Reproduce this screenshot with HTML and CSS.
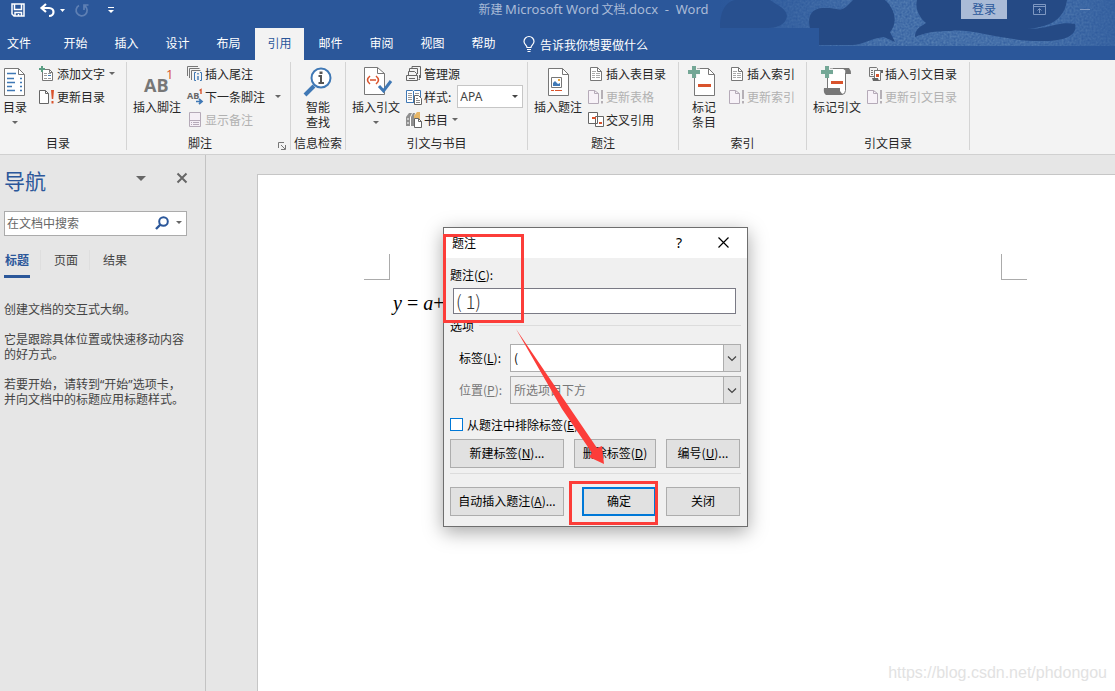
FILE: index.html
```html
<!DOCTYPE html>
<html lang="zh-CN">
<head>
<meta charset="utf-8">
<title>新建 Microsoft Word 文档.docx - Word</title>
<link rel="stylesheet" href="styles.css">
</head>
<body>
<svg class="defs" width="0" height="0" aria-hidden="true">
  <symbol id="caret" viewBox="0 0 6 3"><path d="M0 0h6L3 3z" fill="currentColor"/></symbol>
  <symbol id="refresh" viewBox="0 0 18 16"><path d="M.5 1.500h6l3 3v10h-9z" fill="#fff" stroke="#666"/><path d="M6.500 1.500v3h3" fill="none" stroke="#666"/><path d="M12 1h3l-.8 9h-1.400zM12.500 12h2v2.500h-2z" fill="#d9532c"/></symbol>
  <symbol id="refresh-off" viewBox="0 0 18 16"><path d="M.5 1.500h6l4 3v10h-10z" fill="#f7f2f8" stroke="#b5aab8"/><path d="M6.500 1.500v3h4" fill="none" stroke="#b5aab8"/><path d="M13 1h2v9h-2zM13 12h2v2.500h-2z" fill="#b5b0b6"/></symbol>
  <symbol id="list" viewBox="0 0 18 16"><path d="M2.500 1.500h7l4 4v9h-11z" fill="#fff" stroke="#777"/><path d="M9.500 1.500v4h4" fill="none" stroke="#777"/><path d="M4 5.500h4M4 7.500h3m1 0h4M4 9.500h3m1 0h4M4 11.500h3m1 0h4" stroke="#aaa"/></symbol>
</svg>
<header class="header">
  <svg class="pattern" width="395" height="46" viewBox="0 0 395 46" aria-hidden="true">
    <defs><filter id="grain"><feTurbulence type="fractalNoise" baseFrequency=".5" numOctaves="2"/><feColorMatrix values="0 0 0 0 .145 0 0 0 0 .29 0 0 0 0 .52 .9 0 0 0 0"/></filter>
    <linearGradient id="fade"><stop offset="0" stop-color="#2b579a"/><stop offset=".4" stop-color="#2b579a" stop-opacity=".1"/><stop offset=".8" stop-color="#2b579a" stop-opacity=".1"/><stop offset="1" stop-color="#2b579a" stop-opacity=".6"/></linearGradient></defs>
    <rect width="395" height="46" fill="#2b579a"/>
    <rect width="395" height="46" filter="url(#grain)"/>
    <rect width="395" height="46" fill="url(#fade)"/>
    <path d="M0 28C0 10 6 2 15 0H50C58 6 66 8 67 16C66 25 56 28 48 28z" fill="#28508f"/>
    <g fill="#254a85"><path d="M90 28C87 15 92 7 107 8C119 8 120 13 128 5L133 0H165C178 12 176 26 170 32L175 42L164 37C148 39 143 45 132 45H99V28z"/><path d="M197 0H347C345 14 337 27 306 29C332 29 337 21 355 24C358 35 345 41 325 41C285 42 252 28 231 31C214 31 204 33 195 37C195 29 200 27 206 23C198 16 195 7 197 0z"/></g>
  </svg>
  <div class="titlebar">
    <div class="quick">
      <button aria-label="保存" class="save"><svg width="15" height="15" viewBox="0 0 15 15"><path d="M1 1h12v12H3l-2-2zM3.500 1v5.500h7V1M4 13.500V9.500h6.500v4M7.500 11v2" fill="none" stroke="#fff" stroke-width="1.500"/></svg></button>
      <button aria-label="撤消"><svg width="25" height="15" viewBox="0 0 25 15"><path d="M6 1L1.500 5L6 9M2 5h7c6 0 6 8 0 8" fill="none" stroke="#fff" stroke-width="2.200"/><path d="M20 6h5l-2.500 3z" fill="#fff"/></svg></button>
      <button aria-label="重复" class="redo"><svg width="14" height="15" viewBox="0 0 14 15"><path d="M4 2.500A5.500 5.500 0 1 0 10 3M9 7V2h4.500" fill="none" stroke="#5f80b4" stroke-width="1.700"/></svg></button>
      <button aria-label="自定义快速访问工具栏"><svg width="6" height="7" viewBox="0 0 6 7"><path d="M0 .5h6" stroke="#fff"/><path d="M0 3h6L3 6z" fill="#fff"/></svg></button>
    </div>
    <div class="doc-title">新建 <span>Microsoft Word</span> 文档<span>.docx &nbsp;- &nbsp;Word</span></div>
    <div class="window-tools">
      <button class="login">登录</button>
      <button aria-label="功能区显示选项"><svg width="13" height="11" viewBox="0 0 13 11"><path d="M.5.5h12v10H.5zM0 2.500h13M6.500 9V4.500M4.500 6.500l2-2 2 2" fill="none" stroke="#7e98c2"/></svg></button>
      <button class="minimize" aria-label="最小化"><svg width="10" height="11" viewBox="0 0 10 11"><path d="M0 5.500h10" stroke="#7e98c2"/></svg></button>
    </div>
  </div>
  <nav class="tabs">
    <button class="file">文件</button><button>开始</button><button>插入</button><button>设计</button><button>布局</button><button class="active">引用</button><button>邮件</button><button>审阅</button><button>视图</button><button>帮助</button>
    <button class="tell"><svg width="12" height="17" viewBox="0 0 12 17"><path d="M4 11.500C4 9 1 8.500 1 5.500a5 5 0 0 1 10 0C11 8.500 8 9 8 11.500zM4 13.500h4M4.500 15.500h3" fill="none" stroke="#fff" stroke-width="1.200"/></svg>告诉我你想要做什么</button>
  </nav>
</header>

<section class="ribbon">
  <div class="group toc">
    <div class="tools">
      <button class="big"><svg width="30" height="34" viewBox="0 0 30 34"><path d="M4.500 6.500h14l6 6v21h-20z" fill="#fff" stroke="#777"/><path d="M18.500 6.500v6h6" fill="none" stroke="#777"/><path d="M7 11.500h9M7 16.500h7M7 20.500h8M7 24.500h5M7 28.500h8M20 16.500h2M20 20.500h2M20 24.500h2M20 28.500h2" stroke="#3f78b5" stroke-width="1.500"/></svg><span>目录</span><svg class="caret" width="6" height="3"><use href="#caret"/></svg></button>
      <div class="column">
        <button><svg width="18" height="16" viewBox="0 0 18 16"><path d="M3.500 3.500h7l3 3v8h-10z" fill="#fff" stroke="#777"/><path d="M10.500 3.500v3h3" fill="none" stroke="#777"/><path d="M5 7.500h3m1 0h3M5 9.500h3M5 12.500h3m1 0h3" stroke="#999"/><path d="M9 9.500h3" stroke="#3f78b5"/><path d="M3 0v6M0 3h6" stroke="#5a9e83" stroke-width="2"/></svg><span>添加文字</span><svg class="caret" width="6" height="3"><use href="#caret"/></svg></button>
        <button><svg width="18" height="16"><use href="#refresh"/></svg><span>更新目录</span></button>
      </div>
    </div><h2>目录</h2>
  </div>
  <div class="group notes">
    <div class="tools">
      <button class="big"><svg width="34" height="34" viewBox="0 0 34 34"><text x="4" y="30" class="ab">AB</text><text x="26" y="17" class="one">1</text></svg><span>插入脚注</span></button>
      <div class="column">
        <button><svg width="18" height="16" viewBox="0 0 18 16"><path d="M.5 10V.5H11M2.500 12V2.500h10M4.500 14V4.500h9" fill="none" stroke="#777"/><path d="M9 6.500H7.500v8H9M13 6.500h1.500v8H13" fill="none" stroke="#3f78b5"/><path d="M11 7v1.500M11 10v4" stroke="#3f78b5" stroke-width="1.400"/></svg><span>插入尾注</span></button>
        <button><svg width="18" height="16" viewBox="0 0 18 16"><text x="0" y="10" class="ab-small">AB</text><path d="M12.500 1.500L14 .5V5" fill="none" stroke="#d9532c" stroke-width="1.400"/><path d="M9 12.500h6M12 10l3 2.500-3 2.500" fill="none" stroke="#3f78b5" stroke-width="1.700"/></svg><span>下一条脚注</span><svg class="caret far" width="6" height="3"><use href="#caret"/></svg></button>
        <button disabled><svg width="18" height="16" viewBox="0 0 18 16"><path d="M2.500.5h11v14h-11zM2 8.500h12M4 10.500h1m1 0h6M4 12.500h1m1 0h6" fill="#f5eff6" stroke="#b5aab8"/></svg><span>显示备注</span></button>
      </div>
    </div><h2>脚注</h2>
    <button class="launcher" aria-label="脚注和尾注"><svg width="8" height="8" viewBox="0 0 8 8"><path d="M.5 6V.5H6M3 3l4 4M7.500 3v4.500H3" fill="none" stroke="#777"/></svg></button>
  </div>
  <div class="group lookup">
    <div class="tools">
      <button class="big"><svg width="30" height="34" viewBox="0 0 30 34"><path d="M11 24L2 33" stroke="#3f78b5" stroke-width="4"/><circle cx="18" cy="16" r="9.500" fill="#fff" stroke="#3f78b5" stroke-width="2"/><path d="M15.500 14H18v7M15.500 21h5.500" fill="none" stroke="#555" stroke-width="2"/><path d="M16.500 9.500h3v2.500h-3z" fill="#555"/></svg><span>智能</span><span>查找</span></button>
    </div><h2>信息检索</h2>
  </div>
  <div class="group cite">
    <div class="tools">
      <button class="big"><svg width="30" height="34" viewBox="0 0 30 34"><path d="M3.500 5.500h13l7 6v21h-20z" fill="#fff" stroke="#777"/><path d="M16.500 5.500v6h7" fill="none" stroke="#777"/><path d="M9 14q-5 4 0 8M15 14q5 4 0 8M9 18h6" fill="none" stroke="#d9532c" stroke-width="1.600"/><path d="M18 24l4.500 5L30 19" fill="none" stroke="#3f78b5" stroke-width="3"/></svg><span>插入引文</span><svg class="caret" width="6" height="3"><use href="#caret"/></svg></button>
      <div class="column">
        <button><svg width="18" height="16" viewBox="0 0 18 16"><path d="M6 2.500V.5h8.500V9M3.500 5V2.500h8V8M2.500 9V5.500h6l2 2V9M.5 9.500h11v5H.5z" fill="none" stroke="#666"/><path d="M3 12.500h6" stroke="#666"/><path d="M13 9h2v3h-2zM12 14l2-2v2z" fill="#666"/></svg><span>管理源</span></button>
        <div class="field"><svg width="18" height="16" viewBox="0 0 18 16"><path d="M.5 1.500h6l1 1 1-1h6v12H.5zM7.500 2v11" fill="#fff" stroke="#3f78b5"/><path d="M2 4.500h4M2 6.500h4M2 8.500h4M2 10.500h4M9 4.500h4" stroke="#999"/><path d="M8.500 6.500h4l3 3v6h-7z" fill="#fff" stroke="#666"/><path d="M10 9.500h2M10 11.500h4M10 13.500h4" stroke="#888"/></svg><label for="style">样式:</label><div class="select-wrap style"><select id="style"><option>APA</option></select><svg width="6" height="3"><use href="#caret"/></svg></div></div>
        <button><svg width="18" height="16" viewBox="0 0 18 16"><path d="M0 5l3-4h3L4 5v9H0zM5 5l2-4h2L8 5v9H5z" fill="#8f8f8f"/><path d="M1 7h2M1 11h2M4.500 5v9" stroke="#fff"/><path d="M8 4l3-4h3v7H8z" fill="#e6b667"/><path d="M8.500 6.500h4l3 3v6h-7z" fill="#fff" stroke="#666"/><path d="M12.500 6.500v3h3" fill="none" stroke="#666"/></svg><span>书目</span><svg class="caret" width="6" height="3"><use href="#caret"/></svg></button>
      </div>
    </div><h2>引文与书目</h2>
  </div>
  <div class="group captions">
    <div class="tools">
      <button class="big"><svg width="30" height="34" viewBox="0 0 30 34"><path d="M5.500 6.500h14l6 6v21h-20z" fill="#fff" stroke="#777"/><path d="M19.500 6.500v6h6M8.500 15.500h10v10h-10z" fill="none" stroke="#777"/><path d="M10 24v-3l2-2 3 3 2-1v3z" fill="#3f78b5"/><path d="M15 17h2v2h-2z" fill="#e5a33d"/><path d="M8 28.500h3m1 0h7" stroke="#d9532c"/></svg><span>插入题注</span></button>
      <div class="column">
        <button><svg width="18" height="16"><use href="#list"/></svg><span>插入表目录</span></button>
        <button disabled><svg width="18" height="16"><use href="#refresh-off"/></svg><span>更新表格</span></button>
        <button><svg width="18" height="16" viewBox="0 0 18 16"><path d="M.5.500h9v11h-9zM7.500 4.500h8v10h-8z" fill="#fff" stroke="#666"/><path d="M4 6h4M11 11h3" stroke="#d9532c" stroke-width="2"/></svg><span>交叉引用</span></button>
      </div>
    </div><h2>题注</h2>
  </div>
  <div class="group index">
    <div class="tools">
      <button class="big"><svg width="30" height="34" viewBox="0 0 30 34"><path d="M5.500 6.500h14l6 6v21h-20z" fill="#fff" stroke="#777"/><path d="M19.500 6.500v6h6" fill="none" stroke="#777"/><path d="M5 3v13M-1 9.500h12" stroke="#f3f3f3" stroke-width="6"/><path d="M5 4v12M-1 10h12" stroke="#74a796" stroke-width="4"/><path d="M9 23.500h13" stroke="#d9532c" stroke-width="3"/></svg><span>标记</span><span>条目</span></button>
      <div class="column">
        <button><svg width="18" height="16"><use href="#list"/></svg><span>插入索引</span></button>
        <button disabled><svg width="18" height="16"><use href="#refresh-off"/></svg><span>更新索引</span></button>
      </div>
    </div><h2>索引</h2>
  </div>
  <div class="group authorities">
    <div class="tools">
      <button class="big"><svg width="30" height="34" viewBox="0 0 30 34"><path d="M5.500 6.500h19l-1 4v18q0 4-4 4h-14z" fill="#fff" stroke="#777"/><path d="M20 6h7q2 2 2 6h-5V9zM2 26h16v3l3 4H4q-3-2-2-7z" fill="#777"/><path d="M5 3v13M-1 9.500h12" stroke="#f3f3f3" stroke-width="6"/><path d="M5 4v12M-1 10h12" stroke="#74a796" stroke-width="4"/><path d="M9 20.500h12" stroke="#d9532c" stroke-width="3"/></svg><span>标记引文</span></button>
      <div class="column">
        <button><svg width="18" height="16" viewBox="0 0 18 16"><path d="M7 10.500H2.500v-9h7l1 1V4M4 4.500h2m1 0h2M4 6.500h2M4 8.500h2" fill="none" stroke="#777"/><path d="M7.500 4.500h7l-1 2v8h-6z" fill="#fff" stroke="#777"/><path d="M13 4h3v3h-2zM5 12h6l1 3H6z" fill="#666"/><path d="M9 9.500h3" stroke="#d9532c" stroke-width="3"/></svg><span>插入引文目录</span></button>
        <button disabled><svg width="18" height="16"><use href="#refresh-off"/></svg><span>更新引文目录</span></button>
      </div>
    </div><h2>引文目录</h2>
  </div>
</section>

<main class="workspace">
  <aside class="nav-pane">
    <div class="nav-head"><h1>导航</h1>
      <button aria-label="任务窗格选项"><svg width="10" height="5" viewBox="0 0 10 5"><path d="M0 0h10L5 5z" fill="#666"/></svg></button>
      <button aria-label="关闭"><svg width="10" height="10" viewBox="0 0 10 10"><path d="M.5.5l9 9m0-9l-9 9" stroke="#666" stroke-width="2"/></svg></button>
    </div>
    <div class="search"><input type="text" placeholder="在文档中搜索" aria-label="在文档中搜索"><button aria-label="搜索"><svg width="14" height="14" viewBox="0 0 14 14"><circle cx="8.500" cy="5.500" r="4.300" fill="none" stroke="#2b579a" stroke-width="2"/><path d="M5.500 8.500L1 13" stroke="#2b579a" stroke-width="2.400"/></svg></button><button aria-label="搜索选项"><svg class="caret" width="6" height="3"><use href="#caret"/></svg></button></div>
    <div class="nav-tabs"><button class="active">标题</button><i></i><button>页面</button><i></i><button>结果</button></div>
    <div class="hint">
      <p>创建文档的交互式大纲。</p>
      <p>它是跟踪具体位置或快速移动内容的好方式。</p>
      <p>若要开始，请转到<span>“</span>开始<span>”</span>选项卡，并向文档中的标题应用标题样式。</p>
    </div>
  </aside>
  <section class="canvas">
    <article class="page">
      <div class="crops"><i class="crop left"></i><i class="crop right"></i></div>
      <p class="equation"><i>y</i> = <i>a</i>+</p>
    </article>
  </section>
</main>

<form class="dialog" role="dialog" aria-labelledby="dialog-title">
  <div class="dialog-head"><h2 id="dialog-title">题注</h2><button type="button" class="help" aria-label="帮助">?</button><button type="button" aria-label="关闭"><svg width="11" height="11" viewBox="0 0 11 11"><path d="M.5.5l10 10m0-10l-10 10" stroke="#000" stroke-width="1.200"/></svg></button></div>
  <div class="dialog-body">
    <label for="caption" class="caption-label">题注(<u>C</u>):</label>
    <input id="caption" class="caption" type="text" value="( 1)">
    <div class="legend"><span>选项</span></div>
    <div class="row"><label for="tag">标签(<u>L</u>):</label><div class="select-wrap combo"><select id="tag"><option>(</option></select><span class="drop"><svg width="8" height="5" viewBox="0 0 8 5"><path d="M0 .5l4 4 4-4" fill="none" stroke="#444" stroke-width="1.200"/></svg></span></div></div>
    <div class="row off"><label for="place">位置(<u>P</u>):</label><div class="select-wrap combo"><select id="place" disabled><option>所选项目下方</option></select><span class="drop"><svg width="8" height="5" viewBox="0 0 8 5"><path d="M0 .5l4 4 4-4" fill="none" stroke="#444" stroke-width="1.200"/></svg></span></div></div>
    <label class="check"><input type="checkbox">从题注中排除标签(<u>E</u>)</label>
    <div class="buttons"><button type="button">新建标签(<u>N</u>)...</button><button type="button" class="middle">删除标签(<u>D</u>)</button><button type="button">编号(<u>U</u>)...</button></div>
    <div class="buttons last"><button type="button">自动插入题注(<u>A</u>)...</button><button type="submit" class="ok">确定</button><button type="button">关闭</button></div>
  </div>
  <svg class="marks" width="305" height="300" viewBox="0 0 305 300" aria-hidden="true"><g fill="none" stroke="#fc3d39" stroke-width="3"><path d="M1.500 8.500h78v86h-78zM127.500 255.500h86v41h-86z"/></g><path d="M73 102L154 221l5-2 2 18-15-7 3-4-30-44z" fill="#fc3d39"/></svg>
</form>
<div class="watermark">https://blog.csdn.net/phdongou</div>
</body>
</html>
```

FILE: styles.css
```css
* { box-sizing: border-box; }
body {
  margin: 0;
  height: 100vh;
  display: flex;
  flex-direction: column;
  overflow: hidden;
  position: relative;
  background: #e6e6e6;
  color: #262626;
  font: 12px/15px "Noto Sans CJK SC", "Liberation Sans", sans-serif;
}
button, input, select { font: inherit; color: inherit; border: 0; margin: 0; padding: 0; background: none; border-radius: 0; }
h1, h2, p { margin: 0; font-weight: normal; font-size: 12px; }
svg { display: block; flex: none; overflow: visible; }
.defs { position: absolute; }
.caret { color: #666; }

.header { position: relative; background: #2b579a; color: #fff; }
.pattern { position: absolute; right: 0; top: 0; overflow: hidden; }
.titlebar { position: relative; height: 28px; display: flex; align-items: flex-start; }
.quick { width: 226px; padding: 3px 0 0 11px; display: flex; align-items: center; gap: 14px; }
.quick .redo { margin: 0 5px 0 -4px; }
.doc-title { flex: 1; text-align: center; padding-top: 1px; color: #aabbd7; white-space: nowrap; }
.doc-title span { font-family: "Noto Sans", sans-serif; font-size: 13px; }
.window-tools { width: 154px; display: flex; align-items: center; gap: 26px; }
.window-tools .minimize { margin-left: 8px; }
.login { width: 46px; height: 19px; padding-bottom: 2px; background: #aabbd7; color: #2b579a; }
.tabs { position: relative; display: flex; align-items: stretch; gap: 2px; height: 32px; width: 819px; background: #2b579a; }
.tabs button { width: 49px; padding-bottom: 3px; }
.tabs .active { background: #f3f3f3; color: #2b579a; }
.tabs .file { text-align: left; padding-left: 7px; }
.tabs .tell { width: auto; display: flex; align-items: center; gap: 5px; padding: 0 0 0 13px; white-space: nowrap; }

.ribbon { display: flex; height: 95px; background: #f3f3f3; border-bottom: 1px solid #d0d0d0; padding: 2px 0; }
.group { position: relative; display: flex; flex-direction: column; border-right: 1px solid #d4d4d4; flex: none; height: 88px; }
.tools { display: flex; height: 73px; }
.group h2 { text-align: center; }
.toc { width: 127px; }
.toc h2 { padding-right: 10px; }
.notes { width: 164px; }
.notes h2 { padding-right: 17px; }
.lookup { width: 55px; }
.cite { width: 182px; }
.captions { width: 151px; }
.index { width: 128px; }
.authorities { width: 163px; }
.big { width: 60px; display: flex; flex-direction: column; align-items: center; justify-content: flex-start; white-space: nowrap; }
.big > svg:first-child { margin-bottom: 3px; }
.big .caret { margin-top: 7px; }
.toc .big { width: 30px; margin-right: 9px; }
.lookup .big { width: 54px; }
.index .big { width: 50px; }
.column button, .field { display: flex; align-items: center; height: 23px; white-space: nowrap; }
.column .caret { margin-left: 4px; }
.column .far { margin-left: 10px; }
button:disabled { color: #b1b1b1; }
.select-wrap { position: relative; display: flex; align-items: center; }
.select-wrap select { appearance: none; width: 100%; height: 100%; opacity: 1; }
.style { width: 66px; height: 23px; border: 1px solid #c6c6c6; background: #fff; margin-left: 6px; color: #444; }
.style select { padding-left: 2px; font-family: "Noto Sans", sans-serif; }
.style svg { position: absolute; right: 4px; pointer-events: none; }
.launcher { position: absolute; right: 4px; bottom: 0; }
.ab { font: bold 18px "Open Sans", sans-serif; fill: #777; }
.one { font: 13px "Open Sans", sans-serif; fill: #d9532c; }
.ab-small { font: bold 9px "Open Sans", sans-serif; fill: #666; }

.workspace { flex: 1; display: flex; min-height: 0; }
.nav-pane { width: 206px; flex: none; border-right: 1px solid #c3c3c3; padding: 10px 18px 0 4px; color: #444; }
.nav-head { display: flex; align-items: center; height: 32px; }
.nav-head h1 { flex: 1; font-size: 21px; line-height: 28px; padding-bottom: 3px; color: #2b579a; }
.nav-head button { margin-left: 31px; height: 26px; align-self: flex-start; }
.search { display: flex; align-items: center; height: 25px; margin-top: 14px; border: 1px solid #ababab; background: #fff; gap: 7px; padding: 0 4px 2px 2px; }
.search input { flex: 1; min-width: 0; }
.search input::placeholder { color: #666; opacity: 1; }
.nav-tabs { display: flex; margin-top: 11px; height: 31px; }
.nav-tabs button { width: 26px; padding-bottom: 7px; white-space: nowrap; }
.nav-tabs .active { color: #2b579a; font-weight: bold; border-bottom: 3px solid #2b579a; padding-bottom: 4px; }
.nav-tabs i { width: 1px; height: 20px; margin: 3px 12px 0 10px; background: #dedede; }
.hint { margin-top: 23px; display: grid; gap: 15px; }
.hint span { font-family: "Noto Sans", sans-serif; line-height: 1; }
.canvas { flex: 1; display: flex; padding: 19px 0 0 51px; }
.page { flex: 1; background: #fff; border: solid #c6c6c6; border-width: 1px 0 0 1px; padding: 79px 88px 0 106px; }
.crops { display: flex; justify-content: space-between; }
.crop { width: 26px; height: 26px; border: 0 solid #ababab; border-bottom-width: 1px; }
.crop.left { border-right-width: 1px; }
.crop.right { border-left-width: 1px; }
.equation { margin: 11px 0 0 29px; font: 20px/24px "Liberation Serif", serif; color: #000; }

.dialog { position: absolute; left: 443px; top: 227px; width: 305px; border: 1px solid #6e6e6e; background: #f0f0f0; box-shadow: 0 5px 18px rgba(0, 0, 0, .35); color: #000; }
.dialog-head { display: flex; align-items: center; height: 30px; background: #fff; padding: 0 18px 2px 8px; }
.dialog-head h2 { flex: 1; }
.dialog-head .help { margin-right: 36px; font: 14px/15px "Noto Sans", sans-serif; }
.dialog-body { padding: 9px 6px 10px; }
.caption-label { display: block; }
.caption { display: block; width: 283px; height: 26px; margin: 6px 0 0 3px; padding-left: 2px; border: 1px solid #7a7a85; background: #fff; font-size: 18px; font-weight: 300; color: #333; }
.legend { display: flex; align-items: center; gap: 5px; margin-top: 4px; }
.legend::after { content: ""; flex: 1; height: 1px; background: #dcdcdc; }
.row { display: flex; align-items: center; height: 28px; margin-top: 4px; padding-left: 9px; }
.legend + .row { margin-top: 11px; }
.row label { width: 51px; padding-bottom: 2px; white-space: nowrap; }
.off { color: #777; }
.combo { flex: 1; height: 28px; border: 1px solid #adadad; background: #fff; }
.combo select { padding: 0 0 2px 3px; }
.off .combo { background: #f0f0f0; }
.off select:disabled { color: #777; }
.drop { position: absolute; right: -1px; top: -1px; width: 18px; height: 28px; display: grid; place-items: center; border: 1px solid #adadad; background: #e1e1e1; pointer-events: none; }
.check { display: flex; align-items: center; height: 15px; margin-top: 13px; white-space: nowrap; }
.check input { appearance: none; width: 13px; height: 13px; margin-right: 4px; border: 1px solid #0078d7; background: #fff; }
.buttons { display: flex; justify-content: space-between; margin-top: 7px; padding-right: 1px; }
.buttons button { width: 74px; height: 29px; padding-bottom: 2px; border: 1px solid #adadad; background: #e1e1e1; white-space: nowrap; }
.buttons button:first-child { width: 114px; }
.buttons .middle { width: 82px; }
.buttons .ok { border: 2px solid #0078d7; margin-left: 8px; }
.last { margin-top: 5px; padding-top: 13px; border-top: 1px solid #dcdcdc; }
.marks { position: absolute; left: -1px; top: -1px; pointer-events: none; }
.watermark { position: absolute; right: 8px; bottom: 8px; font: 16px/20px "Liberation Sans", sans-serif; color: #e2e2e2; }
```
